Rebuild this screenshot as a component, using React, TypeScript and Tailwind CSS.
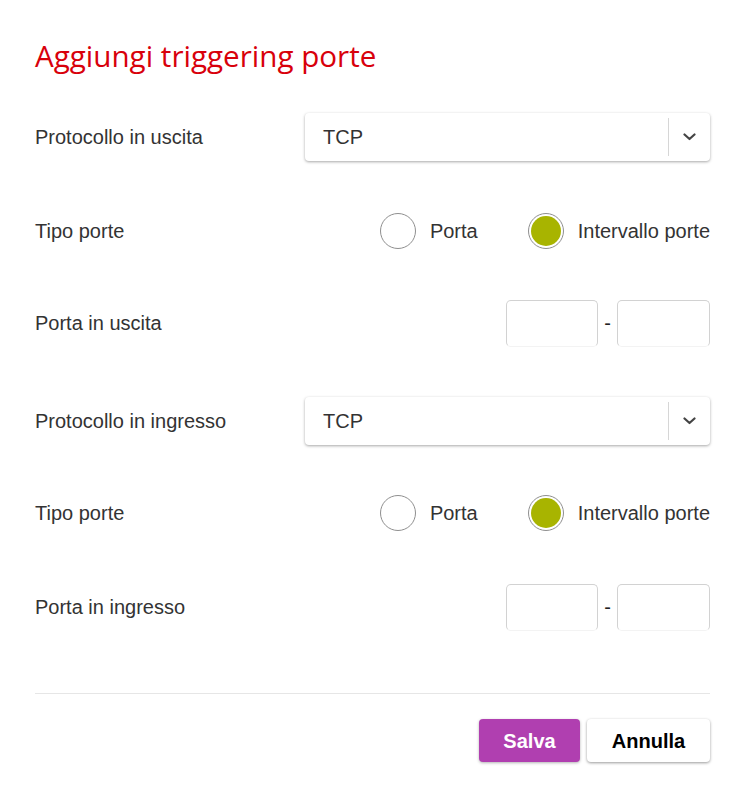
import React from "react";

function Select() {
  return (
    <div className="flex h-[48px] w-[405px] items-center rounded-[4px] bg-white shadow-[0_1px_3px_rgba(0,0,0,0.35)]">
      <div className="flex-1 pl-[18px] text-[20px] text-[#333]">TCP</div>
      <div className="h-[38px] w-px bg-[#d6d6d6]" />
      <div className="flex w-[41px] items-center justify-center">
        <svg width="13" height="8" viewBox="0 0 13 8" fill="none">
          <path d="M1.5 1.5L6.5 6L11.5 1.5" stroke="#444" strokeWidth="2.2" strokeLinecap="round" strokeLinejoin="round" />
        </svg>
      </div>
    </div>
  );
}

function Radios() {
  return (
    <div className="flex items-center">
      <div className="h-[36px] w-[36px] rounded-full border border-[#8f8f8f] bg-white" />
      <span className="ml-[14px] text-[20px] text-[#333]">Porta</span>
      <div className="ml-[50px] flex h-[36px] w-[36px] items-center justify-center rounded-full border border-[#8f8f8f] bg-white">
        <div className="h-[30px] w-[30px] rounded-full bg-[#a8b400]" />
      </div>
      <span className="ml-[14px] text-[20px] text-[#333]">Intervallo porte</span>
    </div>
  );
}

function PortInputs() {
  return (
    <div className="flex items-center">
      <div className="h-[47px] w-[92px] rounded-[5px] border border-[#d2d2d2] border-b-[#f3f3f3] bg-white" />
      <div className="flex w-[19px] justify-center text-[20px] text-[#222]">-</div>
      <div className="h-[47px] w-[93px] rounded-[5px] border border-[#d2d2d2] border-b-[#f3f3f3] bg-white" />
    </div>
  );
}

function Row({ label, children, className }: { label: string; children: React.ReactNode; className: string }) {
  return (
    <div className={"flex h-[48px] items-center justify-between " + className}>
      <span className="text-[20px] text-[#333]">{label}</span>
      {children}
    </div>
  );
}

export default function App() {
  return (
    <div className="h-[795px] w-[750px] bg-white pl-[35px] pr-[40px] pt-[36px]" style={{ fontFamily: '"Liberation Sans", Arial, sans-serif' }}>
      <h1 className="text-[29.6px] leading-[40px] text-[#d8000b]" style={{ fontFamily: '"Open Sans", sans-serif' }}>
        Aggiungi triggering porte
      </h1>
      <Row label="Protocollo in uscita" className="mt-[37px]">
        <Select />
      </Row>
      <Row label="Tipo porte" className="mt-[46px]">
        <Radios />
      </Row>
      <Row label="Porta in uscita" className="mt-[44px]">
        <PortInputs />
      </Row>
      <Row label="Protocollo in ingresso" className="mt-[50px]">
        <Select />
      </Row>
      <Row label="Tipo porte" className="mt-[44px]">
        <Radios />
      </Row>
      <Row label="Porta in ingresso" className="mt-[46px]">
        <PortInputs />
      </Row>
      <div className="mt-[62px] h-px bg-[#e6e6e6]" />
      <div className="mt-[25px] flex justify-end gap-[7px]">
        <button className="h-[43px] w-[101px] rounded-[4px] bg-[#b03fb0] text-[20px] font-bold text-white shadow-[0_1px_3px_rgba(0,0,0,0.3)]">
          Salva
        </button>
        <button className="h-[43px] w-[123px] rounded-[4px] bg-white text-[20px] font-bold text-black shadow-[0_1px_3px_rgba(0,0,0,0.4)]">
          Annulla
        </button>
      </div>
    </div>
  );
}
